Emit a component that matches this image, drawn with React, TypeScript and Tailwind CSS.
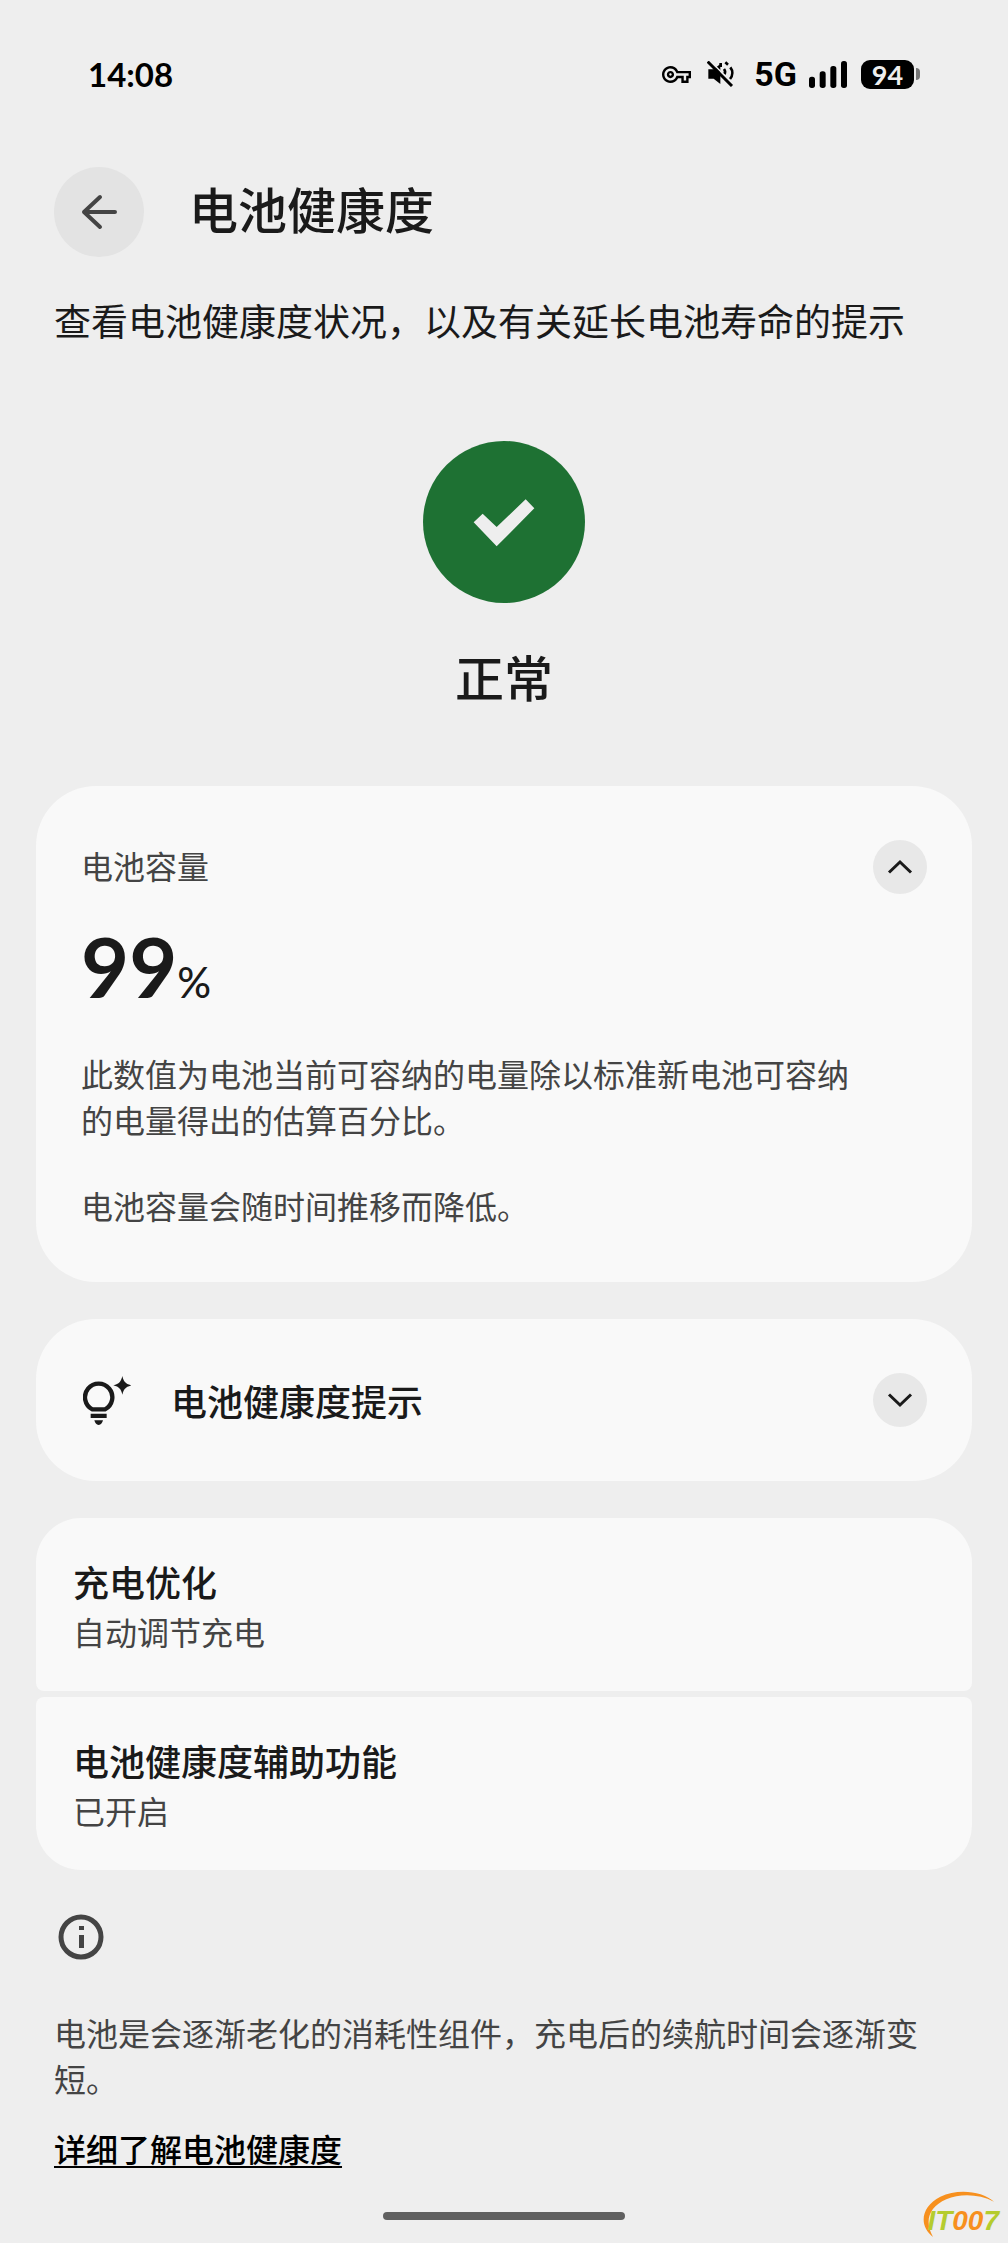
import { useState } from 'react'
import { MdOutlineVpnKey } from 'react-icons/md'

const FONT = "font-['Noto_Sans_CJK_SC',sans-serif]"
const DIGITS = "font-['Lato','Noto_Sans_CJK_SC',sans-serif]"

const SETTINGS = [
  { title: '充电优化', value: '自动调节充电' },
  { title: '电池健康度辅助功能', value: '已开启' },
]

function MuteIcon() {
  return (
    <svg viewBox="0 0 81 78" className="w-[27px] h-[26px]" fill="none" stroke="#000" aria-hidden="true">
      <path d="M4 25h16L40 9v60L20 53H4z" fill="#000" strokeWidth="0" />
      <path d="M41 6v12M55 4l8 7M70 19c8 10 8 24-1 35M51 24c4 5 4 11 1 16" strokeWidth="8" />
      <path d="M9 0l72 71" stroke="#eee" strokeWidth="5" />
      <path d="M2 2l73 73" strokeWidth="9" />
    </svg>
  )
}

function SignalIcon() {
  return (
    <svg viewBox="0 0 114 81" className="w-[38px] h-[27px]" aria-hidden="true">
      <rect x="0" y="47" width="18" height="34" rx="8" />
      <rect x="32" y="31" width="18" height="50" rx="8" />
      <rect x="64" y="15" width="18" height="66" rx="8" />
      <rect x="96" y="0" width="18" height="81" rx="8" />
    </svg>
  )
}

function StatusBar() {
  return (
    <div className="h-[148px] px-[88px] flex items-center justify-between text-black">
      <span className={`text-[33px] leading-none font-bold ${DIGITS}`}>14:08</span>
      <div className="flex items-center">
        <MdOutlineVpnKey size={29} className="mr-4" aria-hidden="true" />
        <MuteIcon />
        <span className="ml-5 mr-3 text-[34px] leading-none font-bold font-['Roboto',sans-serif]">5G</span>
        <SignalIcon />
        <span className={`ml-[14px] w-[53px] h-[29px] rounded-[9px] bg-black text-[#eee] text-[27px] leading-none font-bold flex items-center justify-center ${DIGITS}`}>
          94
        </span>
        <span className="ml-[2px] w-1 h-3 rounded-r-full bg-[#777]" />
      </div>
    </div>
  )
}

function BulbIcon() {
  return (
    <svg viewBox="0 0 144 147" className="w-12 h-[49px] flex-shrink-0" fill="#1a1a1a" aria-hidden="true">
      <path d="M28 100H66A41 41 0 1 0 28 100z" fill="none" stroke="#1a1a1a" strokeWidth="13" />
      <path d="M23 113h48v13H23zM34 133h26c-2 8-6 14-13 14s-11-6-13-14z" />
      <path d="M118 0c4 17 9 23 27 28-18 5-23 11-27 28-4-17-9-23-27-28 18-5 23-11 27-28z" />
    </svg>
  )
}

function ToggleButton({ open, label, onClick }: { open: boolean; label: string; onClick: () => void }) {
  return (
    <button
      type="button"
      aria-label={label}
      aria-expanded={open}
      onClick={onClick}
      className="w-[54px] h-[54px] flex-shrink-0 rounded-full bg-[#e8e8e8] flex items-center justify-center"
    >
      <svg viewBox="0 0 26 16" className="w-[26px] h-4" fill="none" stroke="#1a1a1a" strokeWidth="3">
        <path d={open ? 'M2 13.5L13 3l11 10.5' : 'M2 2.5L13 13 24 2.5'} />
      </svg>
    </button>
  )
}

function Watermark() {
  return (
    <div className="absolute right-[5px] bottom-1 w-20 h-12 flex items-center justify-end">
      <svg viewBox="0 0 240 144" className="absolute inset-0 w-20 h-12" fill="#f7901e" aria-hidden="true">
        <path d="M30 138C-14 104-6 46 52 17 104-8 178 0 213 32 168 9 112 7 70 25 16 49 4 92 30 138z" />
      </svg>
      <span className="relative pt-3 pr-1 text-[28px] leading-none font-bold italic text-[#b5cc2e] font-['Liberation_Sans',sans-serif]">
        IT<span className="text-[#f7901e]">00</span>7
      </span>
    </div>
  )
}

export default function App() {
  const [capacityOpen, setCapacityOpen] = useState(true)
  const [tipsOpen, setTipsOpen] = useState(false)

  return (
    <div lang="zh-CN" className={`relative bg-[#eee] text-[#1a1a1a] ${FONT}`}>
      <StatusBar />

      <header className="px-[54px] pt-[19px] flex items-center gap-[45px]">
        <button
          type="button"
          aria-label="返回"
          className="w-[90px] h-[90px] rounded-full bg-[#e3e3e3] flex items-center justify-center"
        >
          <svg viewBox="0 0 36 36" className="w-9 h-9" fill="none" stroke="#444" strokeWidth="4" strokeLinecap="round" strokeLinejoin="round">
            <path d="M19 3L3 18l16 15M3 18h31" />
          </svg>
        </button>
        <h1 className="pb-2 text-[49px] leading-[60px] font-medium">电池健康度</h1>
      </header>

      <main>
        <p className="px-[54px] mt-[38px] text-[37px] leading-[50px]">查看电池健康度状况，以及有关延长电池寿命的提示</p>

        <div className="mt-24 flex flex-col items-center">
          <svg viewBox="0 0 486 486" className="w-[162px] h-[162px]" aria-hidden="true">
            <circle cx="243" cy="243" r="243" fill="#1e7133" />
            <path d="M152 244l27-26 42 40 87-83 26 27-113 114z" fill="#eee" />
          </svg>
          <p className="mt-[43px] text-[49px] leading-[60px] font-medium">正常</p>
        </div>

        <div className="mt-20 px-9">
          <section className="rounded-[60px] bg-[#f9f9f9] px-[45px] py-[54px] text-[#444]">
            <div className="flex items-center justify-between">
              <h2 className="pb-1 text-[32px] leading-[46px]">电池容量</h2>
              <ToggleButton open={capacityOpen} label="电池容量" onClick={() => setCapacityOpen(!capacityOpen)} />
            </div>
            <p className={`mt-[30px] text-[83px] leading-[84px] font-bold text-[#1a1a1a] ${DIGITS}`}>
              99<span className="text-[42px] leading-none font-medium">%</span>
            </p>
            {capacityOpen && (
              <div className="mt-[42px] pr-14 text-[32px] leading-[46px]">
                <p>此数值为电池当前可容纳的电量除以标准新电池可容纳的电量得出的估算百分比。</p>
                <p className="mt-10">电池容量会随时间推移而降低。</p>
              </div>
            )}
          </section>

          <section className="mt-[37px] rounded-[60px] bg-[#f9f9f9] pl-[47px] pr-[45px] py-[54px] flex items-center">
            <BulbIcon />
            <h2 className="ml-10 flex-1 text-4xl leading-[50px] font-medium">电池健康度提示</h2>
            <ToggleButton open={tipsOpen} label="电池健康度提示" onClick={() => setTipsOpen(!tipsOpen)} />
          </section>

          <div className="mt-[37px] flex flex-col gap-[6px]">
            {SETTINGS.map((item) => (
              <button
                key={item.title}
                type="button"
                className="rounded-lg first:rounded-t-[45px] last:rounded-b-[45px] bg-[#f9f9f9] px-[37px] pt-[38px] pb-[35px] text-left"
              >
                <span className="block text-4xl leading-[50px] font-medium">{item.title}</span>
                <span className="block text-[32px] leading-[50px] text-[#444]">{item.value}</span>
              </button>
            ))}
          </div>
        </div>

        <footer className="px-[54px] pt-10 text-[32px] leading-[46px]">
          <svg viewBox="0 0 54 54" className="w-[54px] h-[54px]" fill="#444" aria-hidden="true">
            <circle cx="27" cy="27" r="20" fill="none" stroke="#444" strokeWidth="5" />
            <path d="M25 25h5v13h-5zM25 16h5v4h-5z" />
          </svg>
          <p className="mt-[45px] text-[#444]">电池是会逐渐老化的消耗性组件，充电后的续航时间会逐渐变短。</p>
          <a href="#battery-health" className="block w-fit mt-6 font-medium text-black underline decoration-2 underline-offset-4">
            详细了解电池健康度
          </a>
        </footer>
      </main>

      <div className="pt-[41px] pb-[23px]">
        <div className="mx-auto w-[242px] h-2 rounded-full bg-[#606060]" />
      </div>
      <Watermark />
    </div>
  )
}
